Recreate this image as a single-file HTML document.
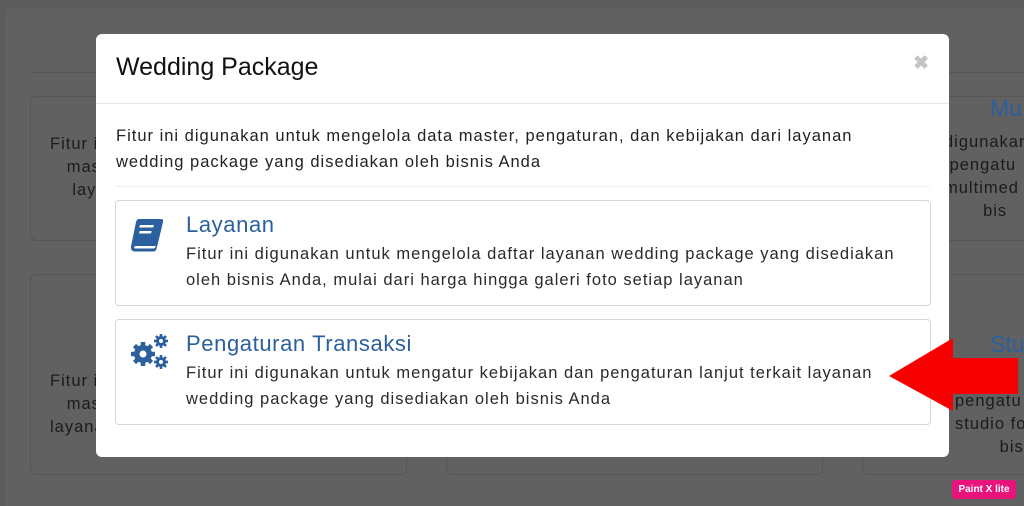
<!DOCTYPE html>
<html><head><meta charset="utf-8"><style>
*{margin:0;padding:0;box-sizing:border-box}
html,body{width:1024px;height:506px;overflow:hidden}
body{background:#5c5c5c;font-family:"Liberation Sans",sans-serif;position:relative;color:#222}
.panel{position:absolute;left:5px;top:8px;width:1019px;height:498px;background:#616161;border-radius:6px 0 0 0}
.bg{position:absolute;border:1px solid #555;border-radius:6px;color:#1b1b1b;font-size:16.5px;letter-spacing:1px;line-height:23px;overflow:hidden;white-space:nowrap}
.hl{position:absolute;left:30px;top:72px;width:994px;border-top:1px solid #555}
.modal{position:absolute;left:96px;top:34px;width:853px;height:423px;background:#fff;border-radius:6px}
.hdr{height:70px;border-bottom:1px solid #e6e6e6;position:relative}
.hdr h1{position:absolute;left:20px;top:19px;font-weight:normal;font-size:25px;color:#111}
.x{position:absolute;right:20px;top:18px;font-size:19px;color:#c4c4c4;font-weight:bold}
.intro{position:absolute;left:20px;top:89px;font-size:16.5px;letter-spacing:1px;line-height:26px;color:#222;white-space:nowrap}
.div{position:absolute;left:19px;top:152px;width:815px;border-top:1px solid #eee}
.card{position:absolute;left:19px;width:816px;height:106px;border:1px solid #d5d5d5;border-radius:4px}
.card h2{position:absolute;left:70px;top:11px;font-weight:normal;font-size:22px;letter-spacing:0.6px;color:#2b5f9e}
.card p{position:absolute;left:70px;top:40px;font-size:16.5px;letter-spacing:1px;line-height:26px;white-space:nowrap;color:#2a2a2a}
.ic{position:absolute;left:12px;top:14px}
.pxl{position:absolute;left:952px;top:480px;width:64px;height:19px;background:#e8137b;border-radius:3px;color:#fff;font-size:10px;font-weight:bold;text-align:center;line-height:19px}
.side{position:absolute;font-size:16.5px;letter-spacing:1px;line-height:23px;color:#1b1b1b;white-space:nowrap}
</style></head><body>
<div class="panel"></div>
<div class="hl"></div>
<div class="bg" style="left:30px;top:96px;width:377px;height:145px;padding:36px 0 0 19px">Fitur ini digunakan<br>&nbsp;&nbsp;&nbsp;master, pengaturan<br>&nbsp;&nbsp;&nbsp;&nbsp;layanan</div>
<div class="bg" style="left:30px;top:274px;width:377px;height:201px;padding:95px 0 0 19px">Fitur ini digunakan<br>&nbsp;&nbsp;&nbsp;master, pengaturan<br>layanan</div>
<div class="bg" style="left:446px;top:274px;width:377px;height:201px"></div>
<div class="bg" style="left:862px;top:96px;width:200px;height:145px"></div>
<div style="position:absolute;left:990px;top:95px;font-size:23px;color:#2b5f9e">Mu</div>
<div class="side" style="left:944px;top:131px">digunakan<br>&nbsp;pengatu<br>multimed<br>&nbsp;&nbsp;&nbsp;&nbsp;&nbsp;&nbsp;&nbsp;bis</div>
<div class="bg" style="left:862px;top:274px;width:200px;height:201px"></div>
<div style="position:absolute;left:990px;top:331px;font-size:23px;color:#2b5f9e">Stu</div>
<div class="side" style="left:955px;top:390px">pengatu<br>studio fo<br>&nbsp;&nbsp;&nbsp;&nbsp;&nbsp;&nbsp;&nbsp;&nbsp;bis</div>

<div class="modal">
 <div class="hdr"><h1>Wedding Package</h1><div class="x">✖</div></div>
 <div class="intro">Fitur ini digunakan untuk mengelola data master, pengaturan, dan kebijakan dari layanan<br>wedding package yang disediakan oleh bisnis Anda</div>
 <div class="div"></div>
 <div class="card" style="top:166px">
  <svg class="ic" width="40" height="40" viewBox="0 0 40 40"><path d="M11 4h22c2 0 2.5 1.5 2 3l-5 21c-.5 2-2 3-4 3H8c-2 0-2.5 2-1 2.5h18c1 0 2-.5 2.5-1.5l5-22 1.5 1-5.5 23c-.4 1.5-1.6 2.5-3 2.5H7c-3 0-4.5-2.5-4-5L8 7c.5-2 1.5-3 3-3z" fill="#2b5f9e"/><rect x="14" y="10" width="14" height="2.5" fill="#fff" transform="skewX(-12)"/><rect x="15" y="16" width="12" height="2.5" fill="#fff" transform="skewX(-12)"/></svg>
  <h2>Layanan</h2>
  <p>Fitur ini digunakan untuk mengelola daftar layanan wedding package yang disediakan<br>oleh bisnis Anda, mulai dari harga hingga galeri foto setiap layanan</p>
 </div>
 <div class="card" style="top:285px">
  <svg class="ic" width="44" height="40" viewBox="0 0 44 40" style="top:12px">
   <g fill="#2b5f9e">
    <circle cx="15" cy="22" r="9"/>
    <g stroke="#2b5f9e" stroke-width="4.5"><line x1="15" y1="10" x2="15" y2="34"/><line x1="3" y1="22" x2="27" y2="22"/><line x1="6.5" y1="13.5" x2="23.5" y2="30.5"/><line x1="23.5" y1="13.5" x2="6.5" y2="30.5"/></g>
    <circle cx="33" cy="9" r="5"/>
    <g stroke="#2b5f9e" stroke-width="2.6"><line x1="33" y1="2" x2="33" y2="16"/><line x1="26" y1="9" x2="40" y2="9"/><line x1="28" y1="4" x2="38" y2="14"/><line x1="38" y1="4" x2="28" y2="14"/></g>
    <circle cx="33" cy="30" r="5"/>
    <g stroke="#2b5f9e" stroke-width="2.6"><line x1="33" y1="23" x2="33" y2="37"/><line x1="26" y1="30" x2="40" y2="30"/><line x1="28" y1="25" x2="38" y2="35"/><line x1="38" y1="25" x2="28" y2="35"/></g>
   </g>
   <circle cx="15" cy="22" r="3.5" fill="#fff"/><circle cx="33" cy="9" r="2" fill="#fff"/><circle cx="33" cy="30" r="2" fill="#fff"/>
  </svg>
  <h2>Pengaturan Transaksi</h2>
  <p>Fitur ini digunakan untuk mengatur kebijakan dan pengaturan lanjut terkait layanan<br>wedding package yang disediakan oleh bisnis Anda</p>
 </div>
</div>
<svg style="position:absolute;left:0;top:0" width="1024" height="506"><polygon points="889,376 953,338 953,358 1018,358 1018,394 953,394 953,411" fill="#f70000"/></svg>
<div class="pxl">Paint X lite</div>
</body></html>
